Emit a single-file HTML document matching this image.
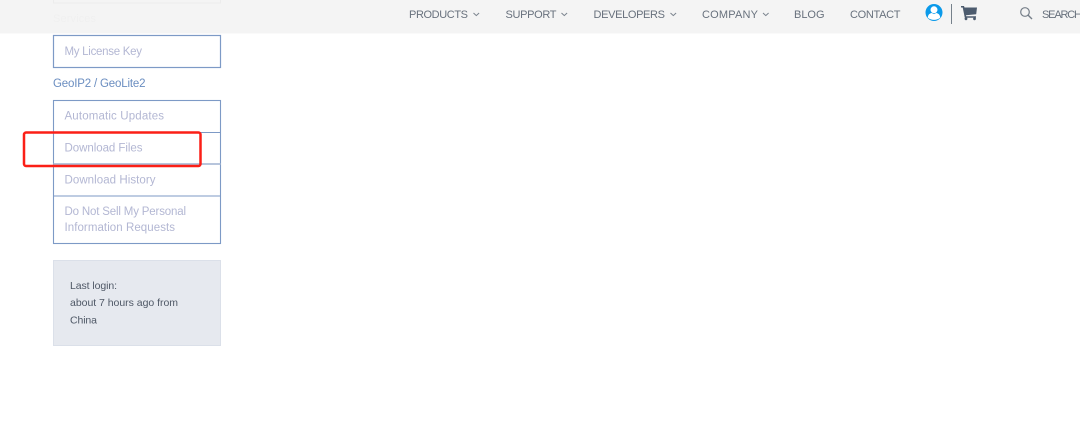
<!DOCTYPE html>
<html lang="en">
<head>
<meta charset="utf-8">
<title>Account</title>
<style>
html,body{margin:0;padding:0;background:#fff;width:1080px;height:427px;overflow:hidden}
svg{display:block;position:absolute;left:0;top:0}
text{font-family:"Liberation Sans",sans-serif;filter:blur(.2px)}
.n{font-size:11px;fill:#68717d}
.m{font-size:11.5px;fill:#b3b7d3}
.l{font-size:10.5px;fill:#4f5866}
</style>
</head>
<body>
<svg width="1080" height="427" viewBox="0 0 1080 427" xmlns="http://www.w3.org/2000/svg">
  <!-- header -->
  <rect x="0" y="0" width="1080" height="33.5" fill="#f4f4f4"/>
  <rect x="53.500" y="-1" width="167" height="4" fill="none" stroke="#ececec"/>
  <text x="53" y="22" font-size="11" fill="#f0f0f0" textLength="43">Services</text>
  <text class="n" x="409" y="18" textLength="59">PRODUCTS</text>
  <path d="M473.500 13l2.800 2.600 2.800-2.600" fill="none" stroke="#7a838d" stroke-width="1"/>
  <text class="n" x="505.500" y="18" textLength="51">SUPPORT</text>
  <path d="M561.500 13l2.800 2.600 2.800-2.600" fill="none" stroke="#7a838d" stroke-width="1"/>
  <text class="n" x="593.500" y="18" textLength="71.500">DEVELOPERS</text>
  <path d="M670.500 13l2.800 2.600 2.800-2.600" fill="none" stroke="#7a838d" stroke-width="1"/>
  <text class="n" x="702" y="18" textLength="56">COMPANY</text>
  <path d="M763 13l2.800 2.600 2.800-2.600" fill="none" stroke="#7a838d" stroke-width="1"/>
  <text class="n" x="794" y="18" textLength="30.500">BLOG</text>
  <text class="n" x="850" y="18" textLength="50.500">CONTACT</text>

  <!-- user icon -->
  <circle cx="934" cy="12.500" r="8.500" fill="#0b9aea"/>
  <circle cx="934" cy="9.800" r="3.500" fill="#fff"/>
  <path d="M927.800 17.600c.2-3.200 2.300-4.400 4-4.600l2.200 1.100 2.200-1.100c1.700.2 3.800 1.400 4 4.600-1.400 1.400-3.900 2.300-6.200 2.300s-4.800-.9-6.200-2.300z" fill="#fff"/>

  <!-- divider -->
  <rect x="951" y="4" width="1" height="20" fill="#76818b"/>

  <!-- cart -->
  <path d="M961 6h3l.5 1.500H977l-.8 6.800-10.200 1 .2 1H976v1.500h-11.200L962.700 7.500H961z" fill="#4c5b6e"/>
  <circle cx="966" cy="18.800" r="1.400" fill="#4c5b6e"/>
  <circle cx="974.500" cy="18.800" r="1.400" fill="#4c5b6e"/>

  <!-- search -->
  <circle cx="1025" cy="12" r="4.300" fill="none" stroke="#757e88" stroke-width="1.200"/>
  <path d="M1028.200 15.200l3.800 3.800" stroke="#757e88" stroke-width="1.400" fill="none"/>
  <text class="n" x="1042" y="18" textLength="40">SEARCH</text>

  <!-- My License Key -->
  <rect x="53.500" y="35.500" width="167" height="32" fill="#fff" stroke="#7d9ac6" stroke-width="1.200"/>
  <text class="m" x="64.500" y="55" textLength="77.500">My License Key</text>

  <!-- section heading -->
  <text x="53" y="87" font-size="11.500" fill="#6a8dc0" textLength="92.500">GeoIP2 / GeoLite2</text>

  <!-- menu -->
  <rect x="53.500" y="100.500" width="167" height="143" fill="#fff" stroke="#7d9ac6" stroke-width="1.100"/>
  <path d="M53 132.500h168M53 196h168" stroke="#7d9ac6" stroke-width="1"/>
  <path d="M53 164h168" stroke="#9fb2d0" stroke-width="1.500"/>
  <text class="m" x="64.500" y="119.500" textLength="99.500">Automatic Updates</text>
  <text class="m" x="64.500" y="151.500" textLength="78">Download Files</text>
  <text class="m" x="64.500" y="183.500" textLength="91">Download History</text>
  <text class="m" x="64.500" y="215" textLength="121.500">Do Not Sell My Personal</text>
  <text class="m" x="64.500" y="231" textLength="110.500">Information Requests</text>

  <!-- last login -->
  <rect x="53.500" y="260.500" width="167" height="85" fill="#e6e9ef" stroke="#dbe0e9" stroke-width="1"/>
  <text class="l" x="70" y="289" textLength="47">Last login:</text>
  <text class="l" x="70" y="306" textLength="108">about 7 hours ago from</text>
  <text class="l" x="70" y="323.500" textLength="27">China</text>

  <!-- red highlight annotation -->
  <rect x="24" y="132.500" width="176.500" height="33.500" rx="2" fill="none" stroke="#fb1f17" stroke-width="2.500"/>
</svg>
</body>
</html>
